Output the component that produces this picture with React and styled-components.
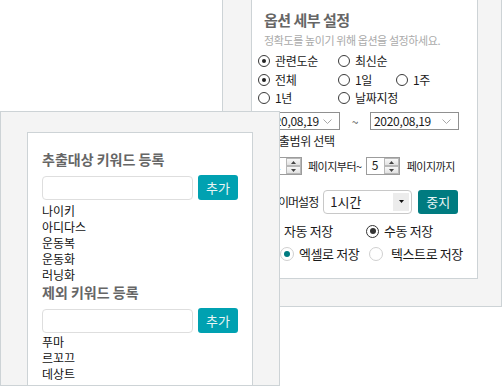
import React from "react";
import styled, { createGlobalStyle } from "styled-components";

const GlobalStyle = createGlobalStyle`
  html, body {
    margin: 0;
    padding: 0;
  }
  body {
    background: #fff;
    font-family: "Noto Sans CJK KR", "Noto Sans", sans-serif;
    color: #1a1a1a;
  }
`;

const Desktop = styled.div`
  position: relative;
  width: 502px;
  height: 386px;
  overflow: hidden;
  background: #fff;
`;

// windows sit on a free canvas, one overlapping the other
const Window = styled.section`
  position: absolute;
  left: ${(p) => p.$left}px;
  top: ${(p) => p.$top}px;
  width: ${(p) => p.$width}px;
  height: ${(p) => p.$height}px;
  box-sizing: border-box;
  display: flex;
  flex-direction: column;
  background: #f4f4f4;
  border: 1px solid #cdd3d6;
  padding: ${(p) => p.$pad};
`;

const Panel = styled.div`
  flex: 1;
  display: flex;
  flex-direction: column;
  background: #fff;
  border: 1px solid #cdd3d6;
  ${(p) => p.$open && "border-bottom: none;"}
  padding: ${(p) => p.$pad};
  overflow: hidden;
`;

/* ---------- option window ---------- */

const Title = styled.h2`
  margin: 0 0 0 6px;
  font-size: 15px;
  font-weight: 700;
  line-height: 20px;
  letter-spacing: -0.5px;
  color: #666;
`;

const Hint = styled.p`
  margin: 2px 0 0 6px;
  font-size: 11px;
  line-height: 16px;
  letter-spacing: -0.4px;
  color: #aaa;
`;

const OptionGrid = styled.div`
  display: grid;
  grid-template-columns: 80px 58px max-content;
  grid-auto-rows: ${(p) => p.$row}px;
  align-items: center;
  margin-top: ${(p) => p.$mt || 0}px;
`;

const Option = styled.label`
  display: flex;
  align-items: center;
  gap: ${(p) => p.$gap || 5}px;
  font-size: ${(p) => p.$size || 12}px;
  line-height: 16px;
  letter-spacing: ${(p) => p.$ls ?? -0.3}px;
  color: #1a1a1a;
  white-space: nowrap;
`;

const radioLook = {
  classic: { size: 12, ring: "1px solid #3a3a3a", dot: 4, color: "#222" },
  dark: { size: 13, ring: "1.5px solid #333", dot: 6, color: "#333" },
  teal: { size: 14, ring: "1px solid #d0d0d0", dot: 6, color: "#007b80" },
};

const Radio = styled.span`
  flex: none;
  width: ${(p) => radioLook[p.$kind].size}px;
  height: ${(p) => radioLook[p.$kind].size}px;
  box-sizing: border-box;
  border-radius: 50%;
  border: ${(p) => radioLook[p.$kind].ring};
  background: #fff;
  display: flex;
  align-items: center;
  justify-content: center;

  &::after {
    content: "";
    display: ${(p) => (p.$checked ? "block" : "none")};
    width: ${(p) => radioLook[p.$kind].dot}px;
    height: ${(p) => radioLook[p.$kind].dot}px;
    border-radius: 50%;
    background: ${(p) => radioLook[p.$kind].color};
  }
`;

const DateRow = styled.div`
  display: flex;
  align-items: center;
  margin-top: 5px;
`;

const DateBox = styled.div`
  width: ${(p) => p.$w}px;
  height: 18px;
  box-sizing: border-box;
  border: 1px solid #909090;
  display: flex;
  align-items: center;
  justify-content: space-between;
  padding: 0 7px 0 3px;
  font-size: 12px;
  letter-spacing: -0.3px;
  line-height: 16px;
`;

const Tilde = styled.span`
  width: 30px;
  text-align: center;
  font-size: 12px;
  color: #555;
`;

const FieldLabel = styled.div`
  margin: ${(p) => p.$mt || 0}px 0 0 10px;
  font-size: 12px;
  line-height: 16px;
  letter-spacing: ${(p) => p.$ls ?? -0.3}px;
  white-space: nowrap;
`;

const SpinRow = styled.div`
  display: flex;
  align-items: center;
  height: 18px;
  margin: 8px 0 0 10px;
`;

const SpinBox = styled.div`
  width: 34px;
  height: 18px;
  box-sizing: border-box;
  border: 1px solid #9c9c9c;
  display: flex;
  justify-content: space-between;
  font-size: 12px;
  line-height: 14px;
  padding-left: 5px;
`;

const SpinButtons = styled.div`
  width: 15px;
  display: flex;
  flex-direction: column;
`;

const SpinButton = styled.span`
  flex: 1;
  box-sizing: border-box;
  border: 1px solid #b8b8b8;
  background: linear-gradient(#f8f8f8, #e2e2e2);
  display: flex;
  align-items: center;
  justify-content: center;
`;

const SpinText = styled.span`
  margin: 0 ${(p) => p.$mr || 0}px 0 ${(p) => p.$ml || 0}px;
  font-size: 11px;
  letter-spacing: -0.5px;
  white-space: nowrap;
`;

const TimerRow = styled.div`
  display: flex;
  align-items: center;
  height: 25px;
  margin: 14px 0 0 10px;
`;

const TimerLabel = styled.span`
  font-size: 12px;
  letter-spacing: -1px;
  white-space: nowrap;
`;

const Dropdown = styled.div`
  margin-left: 5px;
  width: 89px;
  height: 24px;
  box-sizing: border-box;
  border: 1px solid #c8c8c8;
  border-radius: 4px;
  display: flex;
  align-items: center;
  justify-content: space-between;
  padding: 0 2px 0 6px;
  font-size: 13px;
`;

const DropArrow = styled.span`
  width: 16px;
  height: 18px;
  background: #ececec;
  display: flex;
  align-items: center;
  justify-content: center;
`;

const Button = styled.button`
  flex: none;
  margin-left: ${(p) => p.$ml || 0}px;
  width: 40px;
  height: ${(p) => p.$h || 24}px;
  border: none;
  border-radius: 3px;
  background: ${(p) => p.$bg};
  color: #e8f5f5;
  font-family: inherit;
  font-size: 13px;
  padding: 0;
`;

const SaveRow = styled.div`
  display: grid;
  grid-template-columns: ${(p) => p.$cols};
  align-items: center;
  height: 18px;
  margin: ${(p) => p.$mt}px 0 0 ${(p) => p.$ml}px;
`;

/* ---------- keyword window ---------- */

const SectionTitle = styled.h3`
  margin: 0;
  font-size: 14px;
  font-weight: 700;
  line-height: 18px;
  color: #666;
  white-space: nowrap;
`;

const KeywordForm = styled.div`
  display: flex;
  align-items: center;
  gap: 5px;
  height: 25px;
  margin-top: 7px;
`;

const KeywordInput = styled.input`
  width: 151px;
  height: 24px;
  box-sizing: border-box;
  border: 1px solid #dedede;
  border-radius: 4px;
  padding: 0 6px;
  font-family: inherit;
  outline: none;
`;

const KeywordList = styled.ul`
  list-style: none;
  margin: ${(p) => p.$mt}px 0 0;
  padding: 0;

  li {
    font-size: 12px;
    line-height: 16px;
    color: #111;
  }
`;

const Chevron = () => (
  <svg width="9" height="5" viewBox="0 0 9 5">
    <polyline points="0.5,0.5 4.5,4.5 8.5,0.5" fill="none" stroke="#a8a8a8" strokeWidth="1" />
  </svg>
);

const Tri = ({ up, color = "#444" }) => (
  <svg width="5" height="3" viewBox="0 0 5 3">
    <polygon points={up ? "0,3 5,3 2.5,0" : "0,0 5,0 2.5,3"} fill={color} />
  </svg>
);

const Spinner = ({ value }) => (
  <SpinBox>
    <span>{value}</span>
    <SpinButtons>
      <SpinButton>
        <Tri up />
      </SpinButton>
      <SpinButton>
        <Tri />
      </SpinButton>
    </SpinButtons>
  </SpinBox>
);

const OptionWindow = () => (
  <Window $left={222} $top={-30} $width={280} $height={337} $pad="28px 23px 27px 28px">
    <Panel $pad="10px 0 0 6px">
      <Title>옵션 세부 설정</Title>
      <Hint>정확도를 높이기 위해 옵션을 설정하세요.</Hint>

      <OptionGrid $row={21} $mt={2}>
        <Option>
          <Radio $kind="classic" $checked />
          관련도순
        </Option>
        <Option>
          <Radio $kind="classic" />
          최신순
        </Option>
      </OptionGrid>

      <OptionGrid $row={18}>
        <Option>
          <Radio $kind="classic" $checked />
          전체
        </Option>
        <Option>
          <Radio $kind="classic" />
          1일
        </Option>
        <Option>
          <Radio $kind="classic" />
          1주
        </Option>
        <Option>
          <Radio $kind="classic" />
          1년
        </Option>
        <Option>
          <Radio $kind="classic" />
          날짜지정
        </Option>
      </OptionGrid>

      <DateRow>
        <DateBox $w={82}>
          <span>2020,08,19</span>
          <Chevron />
        </DateBox>
        <Tilde>~</Tilde>
        <DateBox $w={89}>
          <span>2020,08,19</span>
          <Chevron />
        </DateBox>
      </DateRow>

      <FieldLabel $mt={3}>추출범위 선택</FieldLabel>

      <SpinRow>
        <Spinner value="1" />
        <SpinText $ml={6} $mr={4}>페이지부터~</SpinText>
        <Spinner value="5" />
        <SpinText $ml={7}>페이지까지</SpinText>
      </SpinRow>

      <TimerRow>
        <TimerLabel>타이머설정</TimerLabel>
        <Dropdown>
          <span>1시간</span>
          <DropArrow>
            <Tri color="#111" />
          </DropArrow>
        </Dropdown>
        <Button $ml={6} $bg="#007b80">중지</Button>
      </TimerRow>

      <SaveRow $cols="100px auto" $mt={8} $ml={8}>
        <Option $size={13} $ls={-0.4}>
          <Radio $kind="dark" />
          자동 저장
        </Option>
        <Option $size={13} $ls={-0.4}>
          <Radio $kind="dark" $checked />
          수동 저장
        </Option>
      </SaveRow>

      <SaveRow $cols="89px auto" $mt={5} $ml={22}>
        <Option $size={13} $ls={-0.4}>
          <Radio $kind="teal" $checked />
          엑셀로 저장
        </Option>
        <Option $size={13} $ls={-0.4} $gap={8}>
          <Radio $kind="teal" />
          텍스트로 저장
        </Option>
      </SaveRow>
    </Panel>
  </Window>
);

const KeywordWindow = () => (
  <Window $left={0} $top={111} $width={280} $height={275} $pad="20px 26px 0 26px">
    <Panel $open $pad="17px 0 0 14px">
      <SectionTitle>추출대상 키워드 등록</SectionTitle>
      <KeywordForm>
        <KeywordInput />
        <Button $h={25} $bg="#00a1b1">추가</Button>
      </KeywordForm>
      <KeywordList $mt={3}>
        <li>나이키</li>
        <li>아디다스</li>
        <li>운동복</li>
        <li>운동화</li>
        <li>러닝화</li>
      </KeywordList>

      <SectionTitle>제외 키워드 등록</SectionTitle>
      <KeywordForm>
        <KeywordInput />
        <Button $h={25} $bg="#00a1b1">추가</Button>
      </KeywordForm>
      <KeywordList $mt={1}>
        <li>푸마</li>
        <li>르꼬끄</li>
        <li>데상트</li>
      </KeywordList>
    </Panel>
  </Window>
);

export default function App() {
  return (
    <>
      <GlobalStyle />
      <Desktop>
        <OptionWindow />
        <KeywordWindow />
      </Desktop>
    </>
  );
}
